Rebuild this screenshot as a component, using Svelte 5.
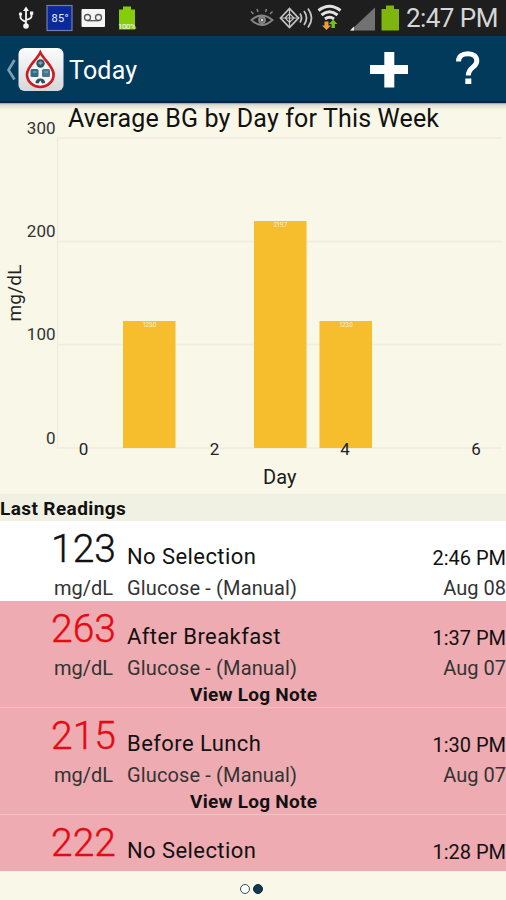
<script>
  const bars = [
    { x: 123, y: 321, label: '123.0' },
    { x: 254, y: 221, label: '219.7' },
    { x: 319.5, y: 321, label: '123.0' }
  ];
  const levels = [
    { value: 300, y: 138 },
    { value: 200, y: 241.5 },
    { value: 100, y: 344.5 },
    { value: 0, y: 448 }
  ];
  const days = [
    { value: 0, x: 83.5 },
    { value: 2, x: 214.5 },
    { value: 4, x: 345 },
    { value: 6, x: 476 }
  ];
  const readings = [
    { value: 123, name: 'No Selection', time: '2:46 PM', date: 'Aug 08', high: false, note: false },
    { value: 263, name: 'After Breakfast', time: '1:37 PM', date: 'Aug 07', high: true, note: true },
    { value: 215, name: 'Before Lunch', time: '1:30 PM', date: 'Aug 07', high: true, note: true },
    { value: 222, name: 'No Selection', time: '1:28 PM', date: '', high: true, note: false }
  ];
</script>

<div class="screen">
  <header class="status">
    <svg width="399" height="36" viewBox="0 0 399 36">
      <g fill="none" stroke="#f4f4f4" stroke-width="1.8">
        <path d="M26 9V26M20.500 14v3.500q0 2 5.500 4.500M31.500 13v3.500q0 2-5.500 3.500" />
      </g>
      <path d="M26 6.500l3 4.500h-6z" fill="#f4f4f4" />
      <circle cx="26" cy="26" r="2.800" fill="#f4f4f4" />
      <circle cx="20.500" cy="14" r="1.700" fill="#f4f4f4" />
      <rect x="30" y="11.500" width="3.200" height="3.200" fill="#f4f4f4" />
      <rect x="47" y="5.500" width="25" height="25" fill="#0a2a9c" stroke="#6f7fb0" stroke-width="1.200" />
      <text x="60" y="21.500" font-size="11" fill="#e8eeff" text-anchor="middle" textLength="17">85°</text>
      <rect x="81.500" y="9" width="23.500" height="18" rx="1" fill="#f5f5f5" />
      <g fill="none" stroke="#555" stroke-width="1.300">
        <circle cx="87.500" cy="17.500" r="3" />
        <circle cx="98.500" cy="17.500" r="3" />
        <path d="M87.500 20.700h11" />
      </g>
      <path d="M119 9.500h4V6.500h8v3h4V29.500h-16z" fill="#86cc08" />
      <text x="127" y="28.500" font-size="8" fill="#fff" text-anchor="middle" textLength="18">100%</text>

      <g fill="none" stroke="#858585" stroke-width="1.800">
        <path d="M251.500 20q10-9 21 0q-11 10-21 0z" />
        <path d="M253.500 14l-2.500-2.500M258 12l-1-3M265.500 12l1-3M270 14l2.500-2.500" stroke-width="1.500" />
        <circle cx="262" cy="20" r="3" fill="#555" />
      </g>
      <circle cx="262" cy="20" r="1.200" fill="#ddd" />
      <g fill="none" stroke="#c4c4c4" stroke-width="1.800">
        <path d="M280.500 18l9-9.500 9 9.500-9 9.500z" />
        <path d="M289.500 9v18M281 18h17M285 18l4.500-4.500 4.500 4.500-4.500 4.500z" stroke-width="1.200" />
        <path d="M300 13.500q3 4.500 0 9M304 11q5 7 0 14M308 8.500q7 9.500 0 19" />
      </g>
      <g fill="none" stroke="#e3e3e3" stroke-width="3">
        <path d="M318.500 10.500q11-8.500 22 0" />
        <path d="M321.500 15q8-6.500 16 0" />
        <path d="M325 19q4.500-3.500 9 0" />
      </g>
      <path d="M324.500 21.500h4v4h2.500l-4.500 4.500-4.500-4.500h2.500z" fill="#f29b3c" />
      <path d="M331.500 28v-4h-2.500l4.200-4.500 4.200 4.500h-2.500v4z" fill="#6fc51c" />
      <path d="M350.500 30.500L375 7.500v23z" fill="#727272" />
      <path d="M350 30.500l4-4v4z" fill="#eee" />
      <path d="M381.500 9h4.500V5.500h8V9h5v21.500h-17.500z" fill="#7eb50f" />
    </svg>
    <span class="clock">2:47 PM</span>
  </header>

  <nav class="bar">
    <svg width="66" height="66" viewBox="0 0 66 66">
      <defs>
        <linearGradient id="tile" x1="0" y1="0" x2="0" y2="1">
          <stop offset="0" stop-color="#fcfcfc" />
          <stop offset="1" stop-color="#d5d8da" />
        </linearGradient>
      </defs>
      <path d="M14.500 24l-6 10 6 9.500" fill="none" stroke="#7da0b3" stroke-width="2.600" />
      <rect x="18.500" y="12" width="45" height="43" rx="6" fill="url(#tile)" />
      <path d="M40.300 16.500c-4 8-13.300 14-13.300 22a13.300 12.500 0 0 0 26.600 0c0-8-9.300-14-13.300-22z" fill="#f5f5f5" stroke="#ce1d22" stroke-width="2.700" />
      <circle cx="40.500" cy="27.500" r="4.200" fill="#315568" />
      <path d="M38 27l2.500-2 2.500 2-2.500 2z" fill="#7ba2b2" />
      <rect x="30.500" y="33" width="8" height="8" rx="1.500" fill="#326b82" />
      <rect x="42" y="33" width="8" height="8" rx="1.500" fill="#43788d" />
      <path d="M35.500 47q0-4.500 4.800-4.500t4.800 4.500l-3 .5-1.800-3-1.800 3z" fill="#28536a" />
      <path d="M33 36h3.500M44.500 36h3.500" stroke="#75a3b5" stroke-width="1.300" />
    </svg>
    <h1>Today</h1>
    <svg class="plus" width="38" height="36" viewBox="0 0 38 36"><path d="M14.300 0h10v13H38v9H24.300v13.500h-10V22H0v-9h14.300z" fill="#fff" /></svg>
    <svg class="help" width="24" height="34" viewBox="0 0 24 34">
      <path d="M2.500 10.500C2.500 5.500 6 2.700 11.800 2.700c6 0 9 2.800 9 7.300 0 6.500-8.500 6-8.500 14.500" fill="none" stroke="#fff" stroke-width="5" />
      <rect x="9.300" y="27.500" width="6" height="5.500" fill="#fff" />
    </svg>
  </nav>

  <svg class="chart" width="506" height="391" viewBox="0 103 506 391">
    <defs>
      <linearGradient id="shade" x1="0" y1="0" x2="0" y2="1">
        <stop offset="0" stop-color="#8f9a9c" />
        <stop offset="0.250" stop-color="#dddccf" />
        <stop offset="1" stop-color="#f9f7e7" />
      </linearGradient>
    </defs>
    <rect x="0" y="103" width="506" height="7" fill="url(#shade)" />
    <g stroke="#efede0" stroke-width="1.300">
      <path d="M57.500 138V448" />
      {#each levels as level}
        <path d="M57 {level.y}H502" />
      {/each}
    </g>
    {#each bars as bar}
      <rect x={bar.x} y={bar.y} width="52.500" height={448 - bar.y} fill="#f6bd2c" />
      <text x={bar.x + 26.500} y={bar.y + 6.300} font-size="6.500" fill="#fff3d2" text-anchor="middle" textLength="14">{bar.label}</text>
    {/each}
    {#each levels as level}
      <text x="55.500" y={level.y - 4.5} font-size="17" fill="#333" text-anchor="end">{level.value}</text>
    {/each}
    {#each days as day}
      <text x={day.x} y="455" font-size="17" fill="#222" text-anchor="middle">{day.value}</text>
    {/each}
    <text x="68" y="127" font-size="25" fill="#111" textLength="371">Average BG by Day for This Week</text>
    <text x="263" y="484" font-size="20" fill="#1a1a1a" textLength="33.500">Day</text>
    <text transform="translate(20.500 321.500) rotate(-90)" font-size="19" fill="#222" textLength="57">mg/dL</text>
  </svg>

  <h2>Last Readings</h2>

  <main>
    {#each readings as r}
      <article class:high={r.high}>
        <div class="line first">
          <span class="value">{r.value}</span>
          <span class="name">{r.name}</span>
          <span class="time">{r.time}</span>
        </div>
        {#if r.date}
          <div class="line second">
            <span class="unit">mg/dL</span>
            <span class="kind">Glucose - (Manual)</span>
            <span class="date">{r.date}</span>
          </div>
        {/if}
        {#if r.note}
          <div class="note">View Log Note</div>
        {/if}
      </article>
    {/each}
  </main>

  <footer>
    <i></i>
    <i class="on"></i>
  </footer>
</div>

<style>
  :global(body) {
    margin: 0;
  }
  .screen {
    width: 506px;
    height: 900px;
    overflow: hidden;
    display: flex;
    flex-direction: column;
    background: #f9f7e7;
    font-family: Roboto, 'Noto Sans', sans-serif;
    color: #111;
    white-space: nowrap;
  }
  .screen > * {
    flex: none;
  }
  svg {
    display: block;
    flex: none;
  }
  .status {
    height: 36px;
    display: flex;
    background: #1e1e1e;
    color: #d6d6d6;
  }
  .clock {
    font-size: 26px;
    line-height: 37px;
    margin-left: 7px;
    letter-spacing: -0.550px;
  }
  .bar {
    height: 67px;
    display: flex;
    box-sizing: border-box;
    background: #013a5b;
    border-bottom: 2px solid #00284b;
    color: #fff;
  }
  h1 {
    margin: 0 0 0 3px;
    width: 301px;
    font-size: 25px;
    line-height: 69px;
    font-weight: 400;
    letter-spacing: 0.200px;
  }
  .plus {
    margin: 16px 48px 0 0;
  }
  .help {
    margin-top: 15px;
  }
  h2 {
    margin: 0;
    height: 27px;
    background: #f0f1e3;
    font-size: 19px;
    line-height: 29px;
    font-weight: 700;
    letter-spacing: 0.400px;
  }
  main {
    height: 349.500px;
    overflow: hidden;
  }
  article {
    height: 80px;
    box-sizing: border-box;
    background: #fff;
  }
  article.high {
    height: 107px;
    background: #eeabb1;
    border-bottom: 1px solid #edc4c1;
  }
  .line {
    display: flex;
  }
  .first {
    height: 55px;
  }
  .value {
    width: 116px;
    text-align: right;
    font-size: 39px;
    line-height: 40px;
    padding-top: 8px;
    font-weight: 300;
    -webkit-text-stroke: 0.400px currentColor;
  }
  .high .value {
    color: #e40a12;
  }
  .name {
    flex: 1;
    padding: 24px 0 0 11px;
    font-size: 22px;
    line-height: 24px;
    letter-spacing: 0.420px;
  }
  .time {
    padding-top: 25px;
    font-size: 20px;
    line-height: 24px;
  }
  .second {
    font-size: 20px;
    line-height: 24px;
    color: #333;
  }
  .unit {
    width: 113px;
    text-align: right;
  }
  .kind {
    flex: 1;
    padding-left: 14px;
    letter-spacing: 0.130px;
  }
  .note {
    padding: 3px 0 0 190px;
    font-size: 19px;
    line-height: 24px;
    font-weight: 700;
    letter-spacing: 0.260px;
  }
  footer {
    display: flex;
    justify-content: center;
    gap: 3px;
    padding: 13px 0 0;
    margin-left: -3px;
  }
  i {
    width: 10px;
    height: 10px;
    box-sizing: border-box;
    border: 1.500px solid #31505a;
    border-radius: 50%;
    background: #fff;
  }
  i.on {
    background: #10384f;
    border-color: #10283a;
  }
</style>
